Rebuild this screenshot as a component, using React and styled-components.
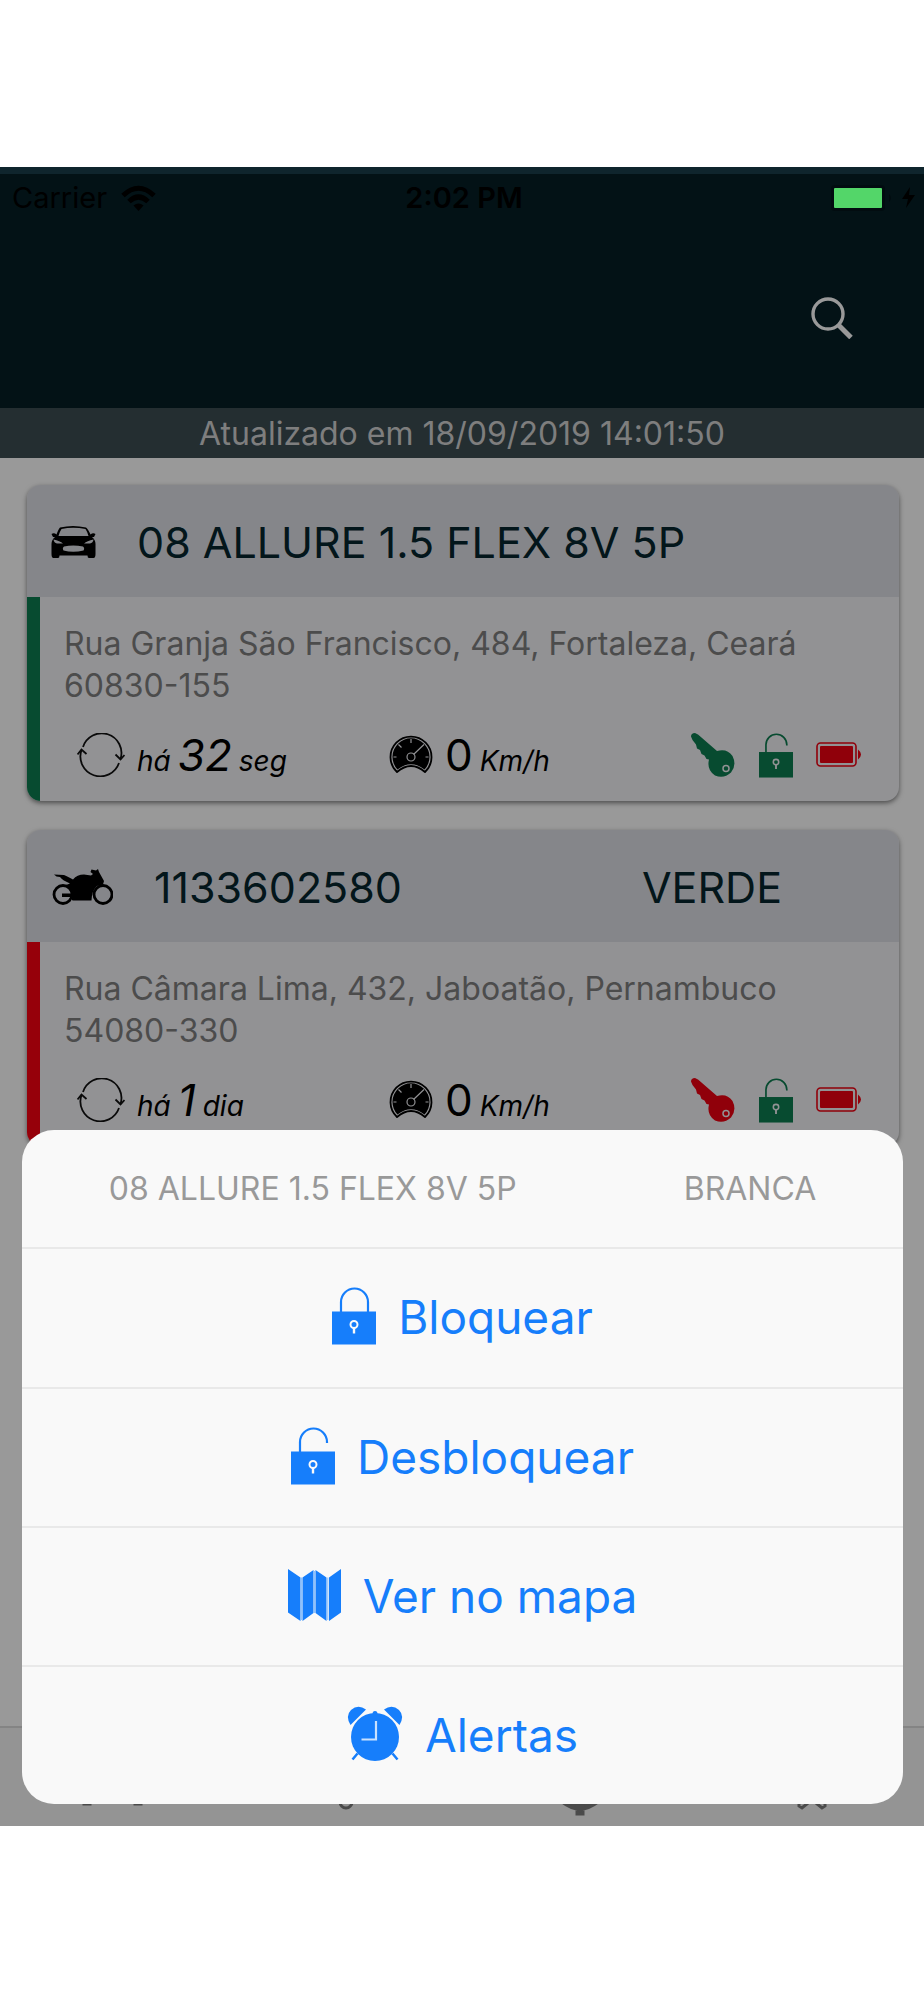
import styled, { createGlobalStyle } from "styled-components"

const GlobalStyle = createGlobalStyle`
    * {
        box-sizing: border-box;
    }
    body {
        margin: 0;
        background-color: #ffffff;
        font-family: Inter, "Liberation Sans", sans-serif;
    }
    button {
        font: inherit;
        border: 0;
        padding: 0;
        margin: 0;
        background: none;
        cursor: pointer;
    }
    svg {
        display: block;
        flex: none;
    }
`

const Page = styled.div`
    min-height: 100vh;
    padding: 167px 0 174px;
    display: flex;
    flex-direction: column;
`

const Phone = styled.div`
    position: relative;
    flex: 1;
    display: flex;
    flex-direction: column;
    background-color: #ffffff;
`

const TopBar = styled.header`
    border-top: 7px solid #193f4b;
    background-color: #051e26;
`

const StatusBar = styled.div`
    display: grid;
    grid-template-columns: 1fr auto 1fr;
    align-items: center;
    height: 49px;
    padding: 0 8px 2px 12px;
    font-size: 29px;
    color: #000000;
`

const Carrier = styled.div`
    display: flex;
    align-items: center;
    gap: 14px;
`

const Clock = styled.time`
    font-weight: 600;
`

/* the charge level stays bright above the backdrop */
const Power = styled.div`
    position: relative;
    z-index: 2;
    display: flex;
    justify-content: flex-end;
`

const NavBar = styled.div`
    display: flex;
    justify-content: flex-end;
    align-items: center;
    height: 185px;
    padding: 4px 71px 0;
`

const Updated = styled.div`
    background-color: #3c4d53;
    color: #d2d2d2;
    height: 50px;
    font-size: 32px;
    line-height: 52px;
    text-align: center;
`

const List = styled.main`
    flex: 1;
    display: flex;
    flex-direction: column;
    gap: 29px;
    padding: 27px 25px 27px 27px;
`

const Card = styled.article`
    border-radius: 14px;
    overflow: hidden;
    background-color: #f3f3f7;
    box-shadow: 0 2px 5px rgba(0,0,0,50%);
`

const CardHeader = styled.div`
    display: flex;
    align-items: center;
    gap: 41px;
    height: 112px;
    padding: 2px 117px 0 24px;
    background-color: #dedfe6;
    color: #05262d;
    font-size: 43px;
`

const Title = styled.h2`
    flex: 1;
    display: flex;
    justify-content: space-between;
    margin: 0;
    font-size: inherit;
    font-weight: 400;
    white-space: nowrap;
`

const CardBody = styled.div`
    border-left: 13px solid ${({ $color }) => $color};
    padding: 26px 38px 23px 24px;
`

const Address = styled.p`
    margin: 0;
    font-size: 32px;
    line-height: 42px;
    color: #7f7f7f;
`

const Stats = styled.div`
    display: grid;
    grid-template-columns: 312fr 301fr 171px;
    align-items: center;
    margin-top: 25px;
    padding-left: 13px;
`

const Stat = styled.div`
    display: flex;
    align-items: center;
    gap: 12px;
    white-space: nowrap;
    color: #000000;
`

const Value = styled.span`
    display: flex;
    align-items: baseline;
    gap: 7px;
    font-size: 28px;
    line-height: 1;
    font-style: italic;
    & strong{
        font-size: 44px;
        font-weight: 400;
        font-style: ${({ $upright }) => $upright ? "normal" : "italic"};
    }
`

const Flags = styled.div`
    display: flex;
    justify-content: space-between;
    align-items: center;
`

const TabBar = styled.nav`
    display: grid;
    grid-template-columns: repeat(4, 1fr);
    height: 100px;
    border-top: 2px solid #dcdcdc;
    background-color: #f7f7f7;
`

const Tab = styled.button`
    display: flex;
    justify-content: center;
    align-items: flex-start;
    color: #7d7d7d;
`

const Backdrop = styled.div`
    position: absolute;
    inset: 0;
    z-index: 1;
    background-color: rgba(0,0,0,40%);
`

const Sheet = styled.section`
    position: absolute;
    left: 22px;
    right: 21px;
    bottom: 22px;
    z-index: 3;
    border-radius: 32px;
    overflow: hidden;
    background-color: #f9f9f9;
`

const SheetTitle = styled.h2`
    display: flex;
    justify-content: center;
    align-items: center;
    gap: 167px;
    height: 117px;
    margin: 0;
    font-size: 32px;
    font-weight: 400;
    color: #999999;
    white-space: nowrap;
`

const Action = styled.button`
    && {
        display: flex;
        justify-content: center;
        align-items: center;
        gap: 22px;
        width: 100%;
        height: 139px;
        padding-bottom: 2px;
        border-top: 2px solid #e9e9e9;
        font-size: 46px;
        color: #167efb;
    }
    & svg{
        margin-bottom: 2px;
    }
    &:first-of-type{
        height: 140px;
    }
`

const GREEN = "#0d7d50"
const RED = "#f00011"

function WifiIcon(){
    return <svg width="35" height="26" viewBox="0 0 35 26" fill="none" stroke="#000" strokeWidth="5">
        <path d="M2 10.500Q17.500 -4 33 10.500" />
        <path d="M8 16.500Q17.500 7.500 27 16.500" />
        <path d="M17.500 26l-5-5.500q5-4 10 0z" fill="#000" stroke="none" />
    </svg>
}

function PowerIcon(){
    return <svg width="86" height="30" viewBox="0 0 86 30">
        <rect x="1" y="2" width="54" height="26" rx="4" fill="#020c10" />
        <rect x="4" y="5" width="48" height="20" rx="1" fill="#53d669" />
        <path d="M59 11q4 4 0 8z" fill="#020c10" />
        <path d="M80 4l-8 12h6l-2 9 9-13h-6z" fill="#000" />
    </svg>
}

function SearchIcon(){
    return <svg width="42" height="42" viewBox="0 0 42 42" fill="none" stroke="#fff">
        <circle cx="17" cy="17" r="15" strokeWidth="3.400" />
        <path d="M27.500 28l12.500 12.500" strokeWidth="5" />
    </svg>
}

function CarIcon(){
    return <svg width="45" height="34" viewBox="0 0 45 34">
        <path fillRule="evenodd" d="M9 2.500Q22 -.5 35 2.500Q37 4 39.500 9.500Q42 7.500 44.500 9L43 12H41Q44.500 15 44.500 19V29Q44.500 33 42.500 33H38Q36.500 33 36.500 30.500H8.500Q8.500 33 7 33H2.500Q.5 33 .5 29V19Q.5 15 4 12H2L.5 9Q3 7.500 5.500 9.500Q7.500 4 9 2.500ZM10.500 4Q9 6 7.500 11H37.500Q36 6 34.500 4Q22 1.500 10.500 4ZM2.500 14.500Q3 18 6 18.500H12Q9 16 2.500 14.500ZM42.500 14.500Q42 18 39 18.500H33Q36 16 42.500 14.500ZM13 21.500Q11 23 12.500 25.500Q22 28 32.500 25.500Q34 23 32 21.500Q22 19.500 13 21.500Z" />
    </svg>
}

function MotoIcon(){
    return <svg width="62" height="37" viewBox="-1 0 62 37">
        <g fill="none" stroke="#000" strokeWidth="2.800">
            <circle cx="11" cy="25.500" r="9" />
            <circle cx="51" cy="25.500" r="9" />
        </g>
        <path d="M2 5.500L12 6Q15 7 21 10.500Q25 5.500 32 5.500L39 6.500L41 5L38.500 3L39.500 .5L44 1.500L46 0L47 3L52 12L51 15.500L45 17Q40 21 39.500 31.500H20.500L18.500 28H10V24.500H19Q18.500 19 14 16L18 14.500Q10 11 8 8Q4 8 2 5.500Z" />
    </svg>
}

function SyncIcon(){
    return <svg width="48" height="44" viewBox="0 0 48 44" fill="none" stroke="#111" strokeWidth="1.800">
        <path d="M6 14A19.500 19.500 0 0 1 43.500 26" />
        <path d="M38.500 21.500l5 5 4-4.500" />
        <path d="M42 30A19.500 19.500 0 0 1 4.500 17" />
        <path d="M.5 21.500l4-5 5 4.500" />
    </svg>
}

function GaugeIcon(){
    return <svg width="44" height="40" viewBox="0 0 44 40">
        <path d="M8 37A20.500 20.500 0 1 1 36 37Q22 25 8 37Z" fill="none" stroke="#000" strokeWidth="1.800" strokeLinejoin="round" />
        <path d="M8.500 34.500A18.500 18.500 0 1 1 35.500 34.500Q22 24 8.500 34.500Z" />
        <g fill="none" stroke="#f3f3f7" strokeWidth="1.200">
            <path d="M22 4v4M4.500 22h3M39.500 22h-3M9.500 9.500l3 3M24.500 19.500L35 9.500" />
            <circle cx="22" cy="22" r="4" />
        </g>
    </svg>
}

function KeyIcon({ color }){
    return <svg width="46" height="46" viewBox="0 0 46 46">
        <path d="M1 4.500Q1 1 5 1L8 2.500L27 19Q37 16 42.500 24Q47 33 41 40.500Q34 47 25 43.500Q16.500 38 19 27.500L16.500 27l-2-3.500-3-1.500-1.500-4-3-1.500-1-4L2.500 8Z" fill={color} />
        <circle cx="36" cy="36.500" r="3" fill="none" stroke="#f3f3f7" strokeWidth="1.500" />
    </svg>
}

function LockIcon({ open, width = 44, height = 58, color = "currentColor", hole = "#f9f9f9" }){
    return <svg width={width} height={height} viewBox="0 0 44 58">
        <path
            d={open ? "M9 25V15A13.500 13.500 0 0 1 36 15V16" : "M9 25V15A13.500 13.500 0 0 1 36 15V25"}
            fill="none" stroke={color} strokeWidth="2.200"
        />
        <rect y="24.500" width="44" height="33" fill={color} />
        <circle cx="22" cy="37.500" r="3.500" fill="none" stroke={hole} strokeWidth="2" />
        <path d="M22 41v5.500" stroke={hole} strokeWidth="2.400" />
    </svg>
}

function BatteryIcon({ color }){
    return <svg width="45" height="26" viewBox="0 0 45 26">
        <rect x="1" y="1" width="39" height="23" rx="3.500" fill="none" stroke={color} strokeWidth="1.600" />
        <rect x="4" y="4" width="33" height="17" rx="1" fill={color} />
        <path d="M42 7.500q6 5 0 10z" fill={color} />
    </svg>
}

function MapIcon(){
    return <svg width="53" height="52" viewBox="0 0 53 52" fill="currentColor">
        <path d="M0 0l12.500 8.500V52L0 43.500ZM14.500 8.500L25.500 1V44L14.500 52ZM27.500 1l11 7.500V52l-11-8ZM41 8.500L53 0V43.500L41 52Z" />
        <path d="M13.500 8.500V51M26.500 2V44M39.800 8.500V51" stroke="#8fc2fc" strokeWidth="1.200" />
    </svg>
}

function AlarmIcon(){
    return <svg width="56" height="56" viewBox="0 0 56 56" fill="currentColor">
        <circle cx="28" cy="31" r="24" />
        <path d="M25.500 8q0-3 2.500-3t2.500 3z" />
        <path d="M3.500 19Q-2 10 4 4Q11-2 19 3.500ZM52.500 19Q58 10 52 4Q45-2 37 3.500Z" />
        <path d="M10.500 47.500l-5 6M45.500 47.500l5 6" stroke="currentColor" strokeWidth="2.500" />
        <path d="M29 15v18.500H14.500" fill="none" stroke="#c9e1fe" strokeWidth="2.200" />
    </svg>
}

function TabIcon({ children }){
    return <svg width="80" height="88" viewBox="0 0 80 88" fill="none" stroke="currentColor" strokeWidth="3">
        {children}
    </svg>
}

const vehicles = [
    {
        name: "08 ALLURE 1.5 FLEX 8V 5P", icon: <CarIcon />, status: GREEN, keyColor: GREEN,
        street: "Rua Granja São Francisco, 484, Fortaleza, Ceará", zip: "60830-155",
        ago: "32", unit: "seg", speed: 0
    },
    {
        name: "1133602580", color: "VERDE", icon: <MotoIcon />, status: "#fa0011", keyColor: RED,
        street: "Rua Câmara Lima, 432, Jaboatão, Pernambuco", zip: "54080-330",
        ago: "1", unit: "dia", speed: 0
    }
]

const actions = [
    { label: "Bloquear", icon: <LockIcon /> },
    { label: "Desbloquear", icon: <LockIcon open /> },
    { label: "Ver no mapa", icon: <MapIcon /> },
    { label: "Alertas", icon: <AlarmIcon /> }
]

function VehicleCard({ vehicle }){
    return <Card>
        <CardHeader>
            {vehicle.icon}
            <Title>
                <span>{vehicle.name}</span>
                { vehicle.color && <span>{vehicle.color}</span>}
            </Title>
        </CardHeader>
        <CardBody $color={vehicle.status}>
            <Address>{vehicle.street}<br />{vehicle.zip}</Address>
            <Stats>
                <Stat>
                    <SyncIcon />
                    <Value>há <strong>{vehicle.ago}</strong> {vehicle.unit}</Value>
                </Stat>
                <Stat>
                    <GaugeIcon />
                    <Value $upright><strong>{vehicle.speed}</strong> Km/h</Value>
                </Stat>
                <Flags>
                    <KeyIcon color={vehicle.keyColor} />
                    <LockIcon open width={34} height={45} color={GREEN} hole="#f3f3f7" />
                    <BatteryIcon color={RED} />
                </Flags>
            </Stats>
        </CardBody>
    </Card>
}

export default function App(){
    return <Page>
        <GlobalStyle />
        <Phone>
            <TopBar>
                <StatusBar>
                    <Carrier>
                        <span>Carrier</span>
                        <WifiIcon />
                    </Carrier>
                    <Clock>2:02 PM</Clock>
                    <Power><PowerIcon /></Power>
                </StatusBar>
                <NavBar>
                    <button aria-label="Buscar"><SearchIcon /></button>
                </NavBar>
            </TopBar>
            <Updated>Atualizado em 18/09/2019 14:01:50</Updated>
            <List>
                {vehicles.map((vehicle) => <VehicleCard key={vehicle.name} vehicle={vehicle} />)}
            </List>
            <TabBar>
                <Tab aria-label="Veículos">
                    <TabIcon>
                        <path d="M8 56V40l10-18h44l10 18v16z" />
                        <path d="M8 58h6v18H8zM59 58h6v18h-6z" fill="currentColor" />
                    </TabIcon>
                </Tab>
                <Tab aria-label="Mapa">
                    <TabIcon>
                        <path d="M33 74V30a6 6 0 0 1 12 0V74a6 6 0 0 1-12 0" />
                    </TabIcon>
                </Tab>
                <Tab aria-label="Notificações">
                    <TabIcon>
                        <path d="M24 74q18 14 36 0V30H24zM39 78h6v8h-6z" fill="currentColor" />
                    </TabIcon>
                </Tab>
                <Tab aria-label="Ajustes">
                    <TabIcon>
                        <path d="M30 74v4l3 2 6-5M56 74v4l-3 2-6-5" />
                        <circle cx="43" cy="48" r="20" />
                    </TabIcon>
                </Tab>
            </TabBar>
            <Backdrop />
            <Sheet role="dialog" aria-label="08 ALLURE 1.5 FLEX 8V 5P">
                <SheetTitle>
                    <span>08 ALLURE 1.5 FLEX 8V 5P</span>
                    <span>BRANCA</span>
                </SheetTitle>
                {actions.map((action) => <Action key={action.label}>
                    {action.icon}
                    <span>{action.label}</span>
                </Action>)}
            </Sheet>
        </Phone>
    </Page>
}
